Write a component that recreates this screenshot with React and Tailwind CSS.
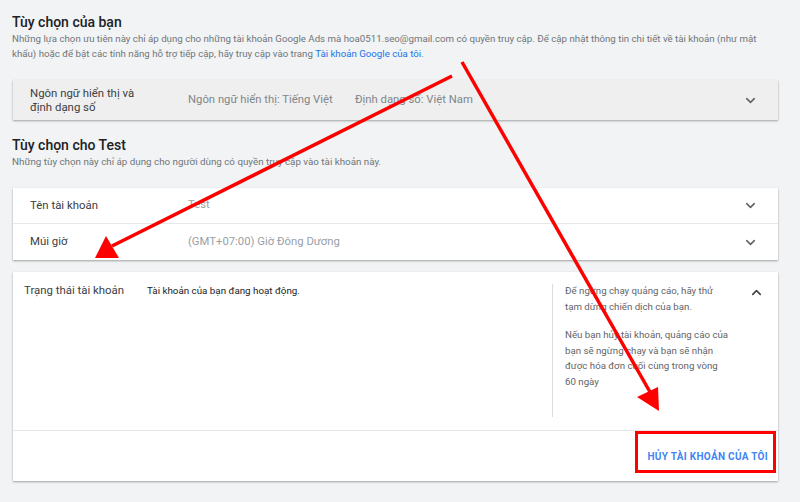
import { ChevronDown, ChevronUp } from "lucide-react";

const font = { fontFamily: "Roboto, 'Noto Sans', sans-serif" };

function Row({ label, value, last }) {
  return (
    <div
      className={`flex h-[36px] items-center pl-[17px] pr-[20px] ${
        last ? "" : "border-b border-[#e8e8e8]"
      }`}
    >
      <div className="w-[158px] text-[11.4px] text-[#3c4043]">{label}</div>
      <div className="flex-1 text-[11.3px] text-[#9aa0a6]">{value}</div>
      <ChevronDown className="h-[15px] w-[15px] text-[#5f6368]" strokeWidth={2.5} />
    </div>
  );
}

function Arrows() {
  return (
    <svg
      className="pointer-events-none absolute left-0 top-0"
      width="800"
      height="502"
      viewBox="0 0 800 502"
    >
      <line x1="452" y1="76" x2="112" y2="246" stroke="#ff0000" strokeWidth="3.5" />
      <polygon points="95,258 106,236 119,258" fill="#ff0000" />
      <line x1="462" y1="62" x2="650" y2="392" stroke="#ff0000" strokeWidth="3.5" />
      <polygon points="659,411 637,397 658,387" fill="#ff0000" />
      <rect
        x="636.5"
        y="432.5"
        width="138"
        height="39"
        fill="none"
        stroke="#ff0000"
        strokeWidth="3"
      />
    </svg>
  );
}

export default function App() {
  return (
    <div
      className="relative h-[502px] w-[800px] overflow-hidden bg-[#f1f3f4] pl-[12px] pr-[22px] pt-[13px]"
      style={font}
    >
      <h2 className="text-[14px] font-medium leading-[18px] text-[#202124]">
        Tùy chọn của bạn
      </h2>
      <p className="whitespace-nowrap text-[9.7px] leading-[15px] text-[#70757a]">
        Những lựa chọn ưu tiên này chỉ áp dụng cho những tài khoản Google Ads mà
        hoa0511.seo@gmail.com có quyền truy cập. Để cập nhật thông tin chi tiết về tài khoản
        (như mật
        <br />
        khẩu) hoặc để bật các tính năng hỗ trợ tiếp cập, hãy truy cập vào trang{" "}
        <span className="text-[#1a73e8]">Tài khoản Google của tôi</span>.
      </p>

      <div className="ml-[1px] mt-[19px] flex h-[40px] items-center bg-[#efefef] pl-[17px] pr-[20px] shadow-[0_1px_2px_rgba(0,0,0,0.35)]">
        <div className="w-[158px] text-[11.4px] leading-[14px] text-[#3c4043]">
          Ngôn ngữ hiển thị và
          <br />
          định dạng số
        </div>
        <div className="w-[167px] text-[11.3px] text-[#80868b]">
          Ngôn ngữ hiển thị: Tiếng Việt
        </div>
        <div className="flex-1 text-[11.3px] text-[#80868b]">Định dạng số: Việt Nam</div>
        <ChevronDown className="h-[15px] w-[15px] text-[#5f6368]" strokeWidth={2.5} />
      </div>

      <h2 className="mt-[16px] text-[14px] font-medium leading-[18px] text-[#202124]">
        Tùy chọn cho Test
      </h2>
      <p className="text-[9.8px] leading-[15px] text-[#70757a]">
        Những tùy chọn này chỉ áp dụng cho người dùng có quyền truy cập vào tài khoản này.
      </p>

      <div className="ml-[1px] mt-[19px] bg-white shadow-[0_1px_2px_rgba(0,0,0,0.35)]">
        <Row label="Tên tài khoản" value="Test" />
        <Row label="Múi giờ" value="(GMT+07:00) Giờ Đông Dương" last />
      </div>

      <div className="ml-[1px] mt-[12px] bg-white shadow-[0_1px_2px_rgba(0,0,0,0.35)]">
        <div className="flex h-[159px] border-b border-[#e8e8e8] pt-[12px]">
          <div className="w-[134px] pl-[11px] text-[11.4px] leading-[13px] text-[#3c4043]">
            Trạng thái tài khoản
          </div>
          <div className="flex-1 text-[9.8px] leading-[13px] text-[#202124]">
            Tài khoản của bạn đang hoạt động.
          </div>
          <div className="mb-[13px] flex w-[226px] border-l border-[#dadce0] pl-[12px] pr-[14px]">
            <div className="-mt-[1px] flex-1 whitespace-nowrap text-[9.7px] leading-[15.5px] text-[#5f6368]">
              Để ngừng chạy quảng cáo, hãy thử
              <br />
              tạm dừng chiến dịch của bạn.
              <div className="h-[13px]" />
              Nếu bạn hủy tài khoản, quảng cáo của
              <br />
              bạn sẽ ngừng chạy và bạn sẽ nhận
              <br />
              được hóa đơn cuối cùng trong vòng
              <br />
              60 ngày
            </div>
            <ChevronUp className="mt-[1px] h-[15px] w-[15px] text-[#3c4043]" strokeWidth={2.5} />
          </div>
        </div>
        <div className="flex h-[50px] items-center justify-end pr-[10px]">
          <span className="text-[10px] font-bold tracking-[0.3px] text-[#4285f4]">
            HỦY TÀI KHOẢN CỦA TÔI
          </span>
        </div>
      </div>

      <Arrows />
    </div>
  );
}
